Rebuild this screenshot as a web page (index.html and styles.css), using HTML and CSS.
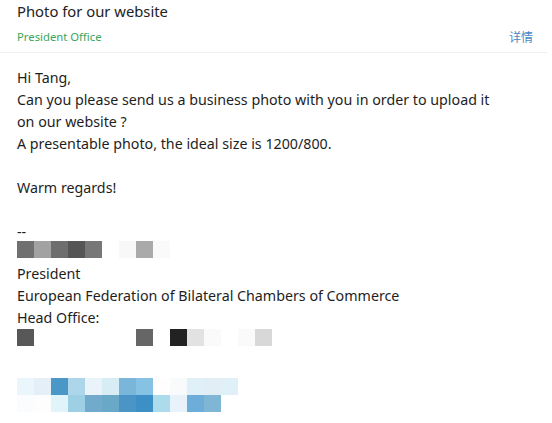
FILE: index.html
```html
<!DOCTYPE html>
<html>
<head>
<meta charset="utf-8">
<link rel="stylesheet" href="styles.css">
</head>
<body>
<div class="header">
  <div class="title">Photo for our website</div>
  <div class="meta">
    <span class="sender">President Office</span>
    <span class="details">详情</span>
  </div>
</div>
<div class="body">
  <div class="line">Hi Tang,</div>
  <div class="line">Can you please send us a business photo with you in order to upload it</div>
  <div class="line">on our website ?</div>
  <div class="line">A presentable photo, the ideal size is 1200/800.</div>
  <div class="line blank"></div>
  <div class="line">Warm regards!</div>
  <div class="line blank"></div>
  <div class="line dash">--</div>
  <div class="mosaic m1">
    <span style="background:#707070"></span><span style="background:#a2a2a2"></span><span style="background:#6e6e6e"></span><span style="background:#555555"></span><span style="background:#777777"></span><span></span><span style="background:#f8f8f8"></span><span style="background:#aaaaaa"></span><span style="background:#fafafa"></span>
  </div>
  <div class="line">President</div>
  <div class="line">European Federation of Bilateral Chambers of Commerce</div>
  <div class="line">Head Office:</div>
  <div class="mosaic m2">
    <span style="background:#585858"></span><span></span><span></span><span></span><span></span><span></span><span></span><span style="background:#666666"></span><span></span><span style="background:#222222"></span><span style="background:#e2e2e2"></span><span style="background:#fafafa"></span><span></span><span style="background:#fafafa"></span><span style="background:#d8d8d8"></span>
  </div>
  <div class="mosaic m3">
    <span style="background:#eaf6fb"></span><span style="background:#e4eff7"></span><span style="background:#4a97c8"></span><span style="background:#aed6ea"></span><span style="background:#eaf3fa"></span><span style="background:#d7ecf4"></span><span style="background:#7ab5da"></span><span style="background:#86c2e4"></span><span style="background:#fffdfd"></span><span style="background:#f8fafc"></span><span style="background:#dff0f8"></span><span style="background:#e2eef6"></span><span style="background:#dff0f8"></span>
  </div>
  <div class="mosaic">
    <span style="background:#fafcfd"></span><span style="background:#fdfdfd"></span><span style="background:#e1f4f9"></span><span style="background:#9dcfe5"></span><span style="background:#72aace"></span><span style="background:#6aa8c8"></span><span style="background:#4a94c6"></span><span style="background:#3c90c6"></span><span style="background:#acdcec"></span><span style="background:#e8f2fa"></span><span style="background:#6caed9"></span><span style="background:#7fb6d6"></span>
  </div>
</div>
</body>
</html>
```
FILE: styles.css
```css
html, body {
  margin: 0;
  padding: 0;
  background: #ffffff;
}
body {
  width: 552px;
  height: 423px;
  overflow: hidden;
  font-family: "Noto Sans", "Noto Sans CJK SC", sans-serif;
  color: #1e1e1e;
}
.header {
  margin-right: 5px;
  padding: 1px 0 0 17px;
  border-bottom: 1px solid #efefef;
  height: 53px;
  box-sizing: border-box;
}
.title {
  font-size: 14.8px;
  line-height: 20px;
  color: #222;
}
.meta {
  display: flex;
  justify-content: space-between;
  align-items: center;
  margin-top: 7px;
  padding-right: 14px;
}
.sender {
  font-size: 11.3px;
  color: #3aa65c;
}
.details {
  font-size: 12px;
  color: #4a86c4;
  font-family: "Noto Sans CJK SC", sans-serif;
}
.body {
  padding: 14px 0 0 17px;
  font-size: 14.25px;
}
.line {
  line-height: 22px;
  height: 22px;
  white-space: nowrap;
}
.dash {
  height: 16px;
  line-height: 22px;
}
.mosaic {
  display: flex;
  height: 17px;
}
.mosaic span {
  width: 17px;
  height: 17px;
  flex: none;
}
.m1 {
  margin-top: 4px;
  margin-bottom: 5px;
}
.m2 {
  margin-top: 0;
}
.m3 {
  margin-top: 32px;
}
```
